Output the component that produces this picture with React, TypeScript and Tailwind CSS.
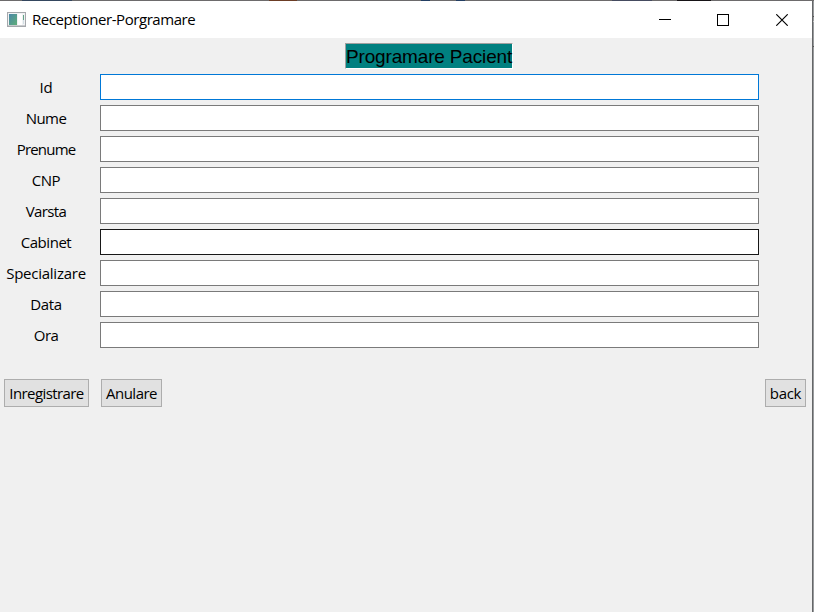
import React, { useState } from "react";

type Field = { label: string; border: string; tracking: string };

const fields: Field[] = [
  { label: "Id", border: "border-[#0078d7]", tracking: "tracking-[-0.1px]" },
  { label: "Nume", border: "border-[#7a7a7a]", tracking: "tracking-[-0.6px]" },
  { label: "Prenume", border: "border-[#7a7a7a]", tracking: "tracking-[-0.8px]" },
  { label: "CNP", border: "border-[#7a7a7a]", tracking: "tracking-[-0.5px]" },
  { label: "Varsta", border: "border-[#7a7a7a]", tracking: "tracking-[-0.6px]" },
  { label: "Cabinet", border: "border-[#171717]", tracking: "tracking-[-0.45px]" },
  { label: "Specializare", border: "border-[#7a7a7a]", tracking: "tracking-[-0.25px]" },
  { label: "Data", border: "border-[#7a7a7a]", tracking: "tracking-[-0.3px]" },
  { label: "Ora", border: "border-[#7a7a7a]", tracking: "tracking-[-0.6px]" },
];

function AppIcon() {
  return (
    <svg width="19" height="15" viewBox="0 0 19 15" className="shrink-0" shapeRendering="crispEdges">
      <defs>
        <linearGradient id="pane" x1="0" y1="0" x2="1" y2="1">
          <stop offset="0" stopColor="#4a87a8" />
          <stop offset="1" stopColor="#5fae78" />
        </linearGradient>
      </defs>
      <rect x="0.5" y="0.5" width="18" height="14" fill="#f1f2f4" stroke="#a5a8ac" />
      <rect x="1" y="13" width="17" height="1" fill="#c9cbce" />
      <rect x="2" y="2" width="8" height="11" fill="url(#pane)" />
      <rect x="11" y="2" width="4" height="11" fill="#fff" />
      <rect x="16" y="3" width="1" height="5" fill="#62a386" />
      <rect x="16" y="8" width="1" height="4" fill="#d3dfe4" />
    </svg>
  );
}

function TitleBar() {
  return (
    <header className="flex h-[37px] items-center bg-white pl-[7px]">
      <AppIcon />
      <span className="ml-[6px] flex-1 whitespace-nowrap text-[15px] tracking-[-0.43px] text-black">
        Receptioner-Porgramare
      </span>
      <div className="flex h-full">
        <button aria-label="Minimize" className="flex h-full w-[58px] items-center justify-center">
          <svg width="12" height="12" shapeRendering="crispEdges"><path d="M0 5.5H12" stroke="#000" /></svg>
        </button>
        <button aria-label="Maximize" className="flex h-full w-[58px] items-center justify-center">
          <svg width="12" height="12" shapeRendering="crispEdges"><rect x="0.5" y="0.5" width="11" height="11" fill="none" stroke="#000" /></svg>
        </button>
        <button aria-label="Close" className="flex h-full w-[60px] items-center justify-center">
          <svg width="12" height="12"><path d="M0.3 0.3L11.7 11.7M11.7 0.3L0.3 11.7" stroke="#000" strokeWidth="1.15" /></svg>
        </button>
      </div>
    </header>
  );
}

function PushButton({ children, className }: { children: React.ReactNode; className: string }) {
  return (
    <button className={"flex h-7 items-center justify-center whitespace-nowrap border border-[#adadad] bg-[#e1e1e1] pt-px text-[15px] " + className}>
      {children}
    </button>
  );
}

export default function App() {
  const [values, setValues] = useState<string[]>(fields.map(() => ""));
  return (
    <div className="flex h-[612px] w-[814px] flex-col overflow-hidden bg-[#f0f0f0] font-['Open_Sans','Noto_Sans',sans-serif] text-black">
      <div className="flex h-px shrink-0 bg-[#6d6b6c]">
        <i className="ml-[22px] w-[50px] bg-[#34465e]" />
        <i className="ml-[197px] w-[28px] bg-[#6b3d25]" />
        <i className="ml-[124px] w-[9px] bg-[#233e62]" />
        <i className="ml-[26px] w-[9px] bg-[#233e62]" />
        <i className="ml-[147px] w-[40px] bg-[#454b60]" />
        <i className="ml-[25px] w-[34px] bg-[#161316]" />
      </div>
      <div className="flex min-h-0 flex-1">
        <div className="flex w-[812px] flex-col">
          <TitleBar />
          <main className="flex flex-1 flex-col bg-[#f0f0f0]">
            <div className="flex pl-[345px] pt-[5px]">
              <h1 className="h-[26px] w-[168px] whitespace-nowrap border border-b-white border-l-[#a0a0a0] border-r-white border-t-[#a0a0a0] bg-[#008080] font-['Liberation_Sans',Arial,sans-serif] text-[19px] leading-[26px] tracking-[-0.16px]">
                Programare Pacient
              </h1>
            </div>
            <form className="mt-[5px] flex flex-col gap-[5px]">
              {fields.map((f, i) => (
                <label key={f.label} className="flex h-[26px] items-center">
                  <span className={"w-[92px] pt-px text-center text-[15px] leading-[25px] " + f.tracking}>{f.label}</span>
                  <input
                    className={"ml-2 h-[26px] w-[659px] border bg-white px-1 text-[15px] outline-none " + f.border}
                    value={values[i]}
                    onChange={(e) => setValues(values.map((v, j) => (j === i ? e.target.value : v)))}
                  />
                </label>
              ))}
            </form>
            <div className="mt-[31px] flex pl-1 pr-[6px]">
              <PushButton className="w-[85px] tracking-[-0.58px]">Inregistrare</PushButton>
              <PushButton className="ml-3 w-[61px] tracking-[-0.5px]">Anulare</PushButton>
              <PushButton className="ml-auto w-[41px] tracking-[-0.3px]">back</PushButton>
            </div>
          </main>
        </div>
        <div className="w-px bg-[#646668]" />
        <div className="flex w-px flex-col bg-[#999b9d]">
          <i className="mt-[15px] h-px bg-[#555]" />
          <i className="mt-[4px] h-px bg-[#ccc]" />
          <i className="mt-[24px] h-px bg-[#555]" />
        </div>
      </div>
    </div>
  );
}
